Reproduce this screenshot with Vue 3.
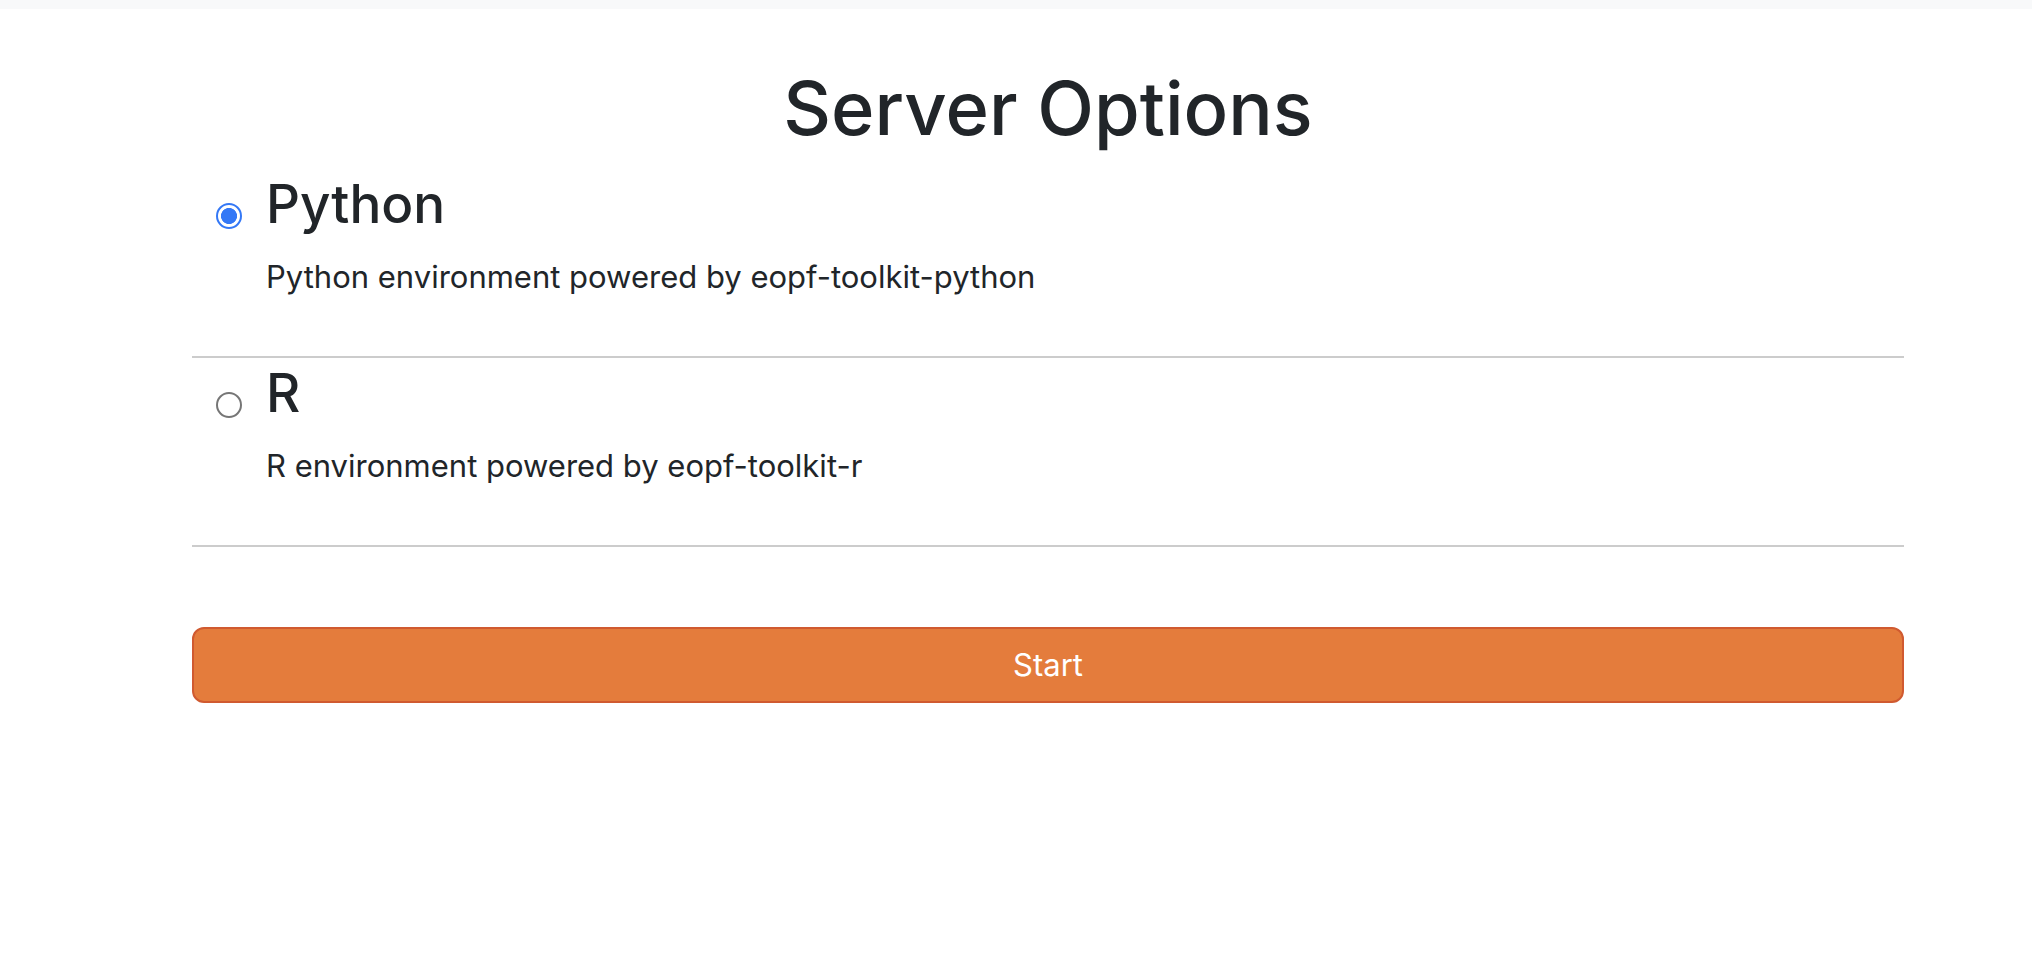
<script setup>
import { ref } from 'vue'

const options = [
  { id: 'python', name: 'Python', description: 'Python environment powered by eopf-toolkit-python' },
  { id: 'r', name: 'R', description: 'R environment powered by eopf-toolkit-r' },
]
const selected = ref('python')
</script>

<template>
  <div class="page">
    <div class="topbar"></div>
    <main class="content">
      <h1 class="title">Server Options</h1>
      <form @submit.prevent>
        <div v-for="option in options" :key="option.id" class="option">
          <input
            :id="option.id"
            v-model="selected"
            class="radio"
            type="radio"
            name="profile"
            :value="option.id"
          />
          <label class="label" :for="option.id">
            <span class="name">{{ option.name }}</span>
            <span class="description">{{ option.description }}</span>
          </label>
        </div>
        <button class="start" type="submit">Start</button>
      </form>
    </main>
  </div>
</template>

<style>
body {
  margin: 0;
  background: #fff;
}
</style>

<style scoped>
.page {
  color: #212529;
  font-family: Inter, "Liberation Sans", sans-serif;
  font-size: 31px;
  line-height: 48px;
}

.topbar {
  height: 9px;
  background: #f8f9fa;
}

.content {
  padding: 50px 128px 64px 192px;
}

.title {
  margin: 0 0 12px;
  font-size: 74px;
  font-weight: 500;
  line-height: 98px;
  text-align: center;
}

.option {
  display: flex;
  align-items: flex-start;
  gap: 24px;
  padding: 0 24px;
  border-bottom: 2px solid #ccc;
}

.radio {
  appearance: none;
  flex: none;
  width: 26px;
  height: 26px;
  margin: 34px 0 0;
  border: 2px solid #767676;
  border-radius: 50%;
  background: #fff;
}

.radio:checked {
  border-color: #3478f6;
  background: radial-gradient(circle closest-side, #3478f6 70%, #fff 76%);
}

.label {
  flex: 1;
  padding-bottom: 55px;
}

.name,
.description {
  display: block;
}

.name {
  margin-bottom: 14px;
  font-size: 53px;
  font-weight: 500;
  line-height: 70px;
}

.start {
  display: block;
  width: 100%;
  margin-top: 80px;
  padding: 12px 24px;
  border: 2px solid #d05a30;
  border-radius: 12px;
  background: #e47c3c;
  color: #fff;
  font: inherit;
  cursor: pointer;
}
</style>
